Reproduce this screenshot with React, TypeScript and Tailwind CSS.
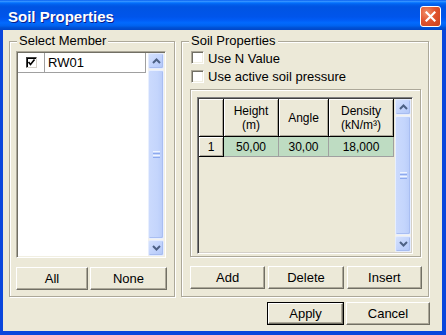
import React from "react";

function Btn({ children, className = "", def = false }: { children: React.ReactNode; className?: string; def?: boolean }) {
  const face = (
    <div className="w-full h-full flex items-center justify-center bg-[#ECE9D8] border border-t-white border-l-white border-r-[#716F64] border-b-[#716F64] shadow-[inset_-1px_-1px_0_#ACA899]">
      <span className="leading-[15px]">{children}</span>
    </div>
  );
  if (def) {
    return <div className={`h-[23px] border border-black flex ${className}`}>{face}</div>;
  }
  return <div className={`h-[23px] flex ${className}`}>{face}</div>;
}

function Group({ label, className = "", children }: { label: string; className?: string; children: React.ReactNode }) {
  return (
    <div className={`relative border border-[#ACA899] shadow-[inset_1px_1px_0_#fff,1px_1px_0_#fff] ${className}`}>
      <span className="absolute left-[7px] top-[-9px] px-[2px] bg-[#ECE9D8] leading-[15px]">{label}</span>
      {children}
    </div>
  );
}

function Arrow({ up }: { up: boolean }) {
  return (
    <div className="h-[16px] w-full rounded-[2px] border border-[#E4ECFE] bg-[linear-gradient(135deg,#D4E1FD_0%,#C3D4FC_50%,#B2C7F8_100%)] shadow-[inset_-1px_-1px_0_#A8BDF0] flex items-center justify-center">
      <svg width="9" height="6" viewBox="0 0 9 6">
        {up ? (
          <path d="M1 5 L4.5 1.5 L8 5" fill="none" stroke="#4D6185" strokeWidth="2" />
        ) : (
          <path d="M1 1 L4.5 4.5 L8 1" fill="none" stroke="#4D6185" strokeWidth="2" />
        )}
      </svg>
    </div>
  );
}

function VScroll({ className = "" }: { className?: string }) {
  return (
    <div className={`w-[16px] flex flex-col bg-[#F3F1EC] ${className}`}>
      <Arrow up />
      <div className="flex-1 my-[1px] rounded-[2px] border border-[#E8EFFE] bg-[linear-gradient(90deg,#CBDAFD_0%,#C4D5FC_60%,#B9CCF9_100%)] shadow-[inset_-1px_-1px_0_#A9BEF2] flex flex-col items-center justify-center gap-[1px]">
        <div className="w-[7px] h-[1px] bg-[#EEF4FE]" />
        <div className="w-[7px] h-[1px] bg-[#8DAAEE]" />
        <div className="w-[7px] h-[1px] bg-[#EEF4FE]" />
        <div className="w-[7px] h-[1px] bg-[#8DAAEE]" />
      </div>
      <Arrow up={false} />
    </div>
  );
}

function CheckBox() {
  return (
    <div className="w-[13px] h-[13px] bg-white border border-t-[#ACA899] border-l-[#ACA899] border-r-white border-b-white shadow-[inset_1px_1px_0_#716F64,inset_-1px_-1px_0_#F1EFE2]" />
  );
}

function HeadCell({ w, children }: { w: string; children?: React.ReactNode }) {
  return (
    <div className={`${w} h-full flex items-center justify-center text-center leading-[14px] text-[12px] bg-[#ECE9D8] border-r border-b border-black shadow-[inset_1px_1px_0_#fff,inset_-1px_-1px_0_#ACA899]`}>
      {children}
    </div>
  );
}

function DataCell({ w, children }: { w: string; children?: React.ReactNode }) {
  return (
    <div className={`${w} h-full flex items-center justify-center text-[12px] bg-[#BEDCC2] border-r border-b border-[#A0A0A0]`}>
      {children}
    </div>
  );
}

export default function App() {
  return (
    <div className="w-[446px] h-[335px] flex flex-col bg-[#0A46DC] font-['Liberation_Sans',Arial,sans-serif] text-[13px] text-black overflow-hidden">
      {/* Title bar */}
      <div className="h-[30px] flex items-start pl-[8px] pr-[5px] bg-[linear-gradient(180deg,#0058EE_0%,#3A93FF_4%,#288EFF_6%,#127DFF_8%,#036FFC_10%,#0262EE_14%,#0057E5_20%,#0054E3_24%,#0055EB_56%,#005BF5_66%,#026AFE_76%,#0062EF_86%,#0052D6_92%,#0046C8_100%)]">
        <span className="mt-[8px] text-white font-bold text-[15px] leading-[18px] [text-shadow:1px_1px_0_#0A1E8A]">Soil Properties</span>
        <div className="ml-auto mt-[6px] w-[21px] h-[21px] rounded-[3px] border border-white bg-[radial-gradient(circle_at_30%_30%,#F0906A_0%,#E2552F_45%,#C8401C_100%)] flex items-center justify-center">
          <svg width="11" height="11" viewBox="0 0 11 11">
            <path d="M1.5 1.5 L9.5 9.5 M9.5 1.5 L1.5 9.5" stroke="white" strokeWidth="2.2" strokeLinecap="square" />
          </svg>
        </div>
      </div>

      {/* Client */}
      <div className="flex-1 ml-[3px] mr-[4px] mb-[4px] bg-[#ECE9D8] flex flex-col">
        <div className="flex mt-[11px] ml-[6px] gap-[6px]">
          {/* Select Member */}
          <Group label="Select Member" className="w-[166px] h-[256px] flex flex-col pl-[6px] pt-[9px]">
            <div className="w-[150px] h-[207px] bg-white border border-t-[#ACA899] border-l-[#ACA899] border-r-white border-b-white shadow-[inset_1px_1px_0_#716F64,inset_-1px_-1px_0_#F1EFE2] p-[1px] flex">
              <div className="flex-1 flex flex-col">
                <div className="flex h-[20px] border-b border-[#A0A0A0]">
                  <div className="w-[27px] h-full border-r border-[#A0A0A0] flex items-center justify-center">
                    <div className="w-[11px] h-[11px] bg-white border border-t-[#404040] border-l-[#404040] border-r-[#D4D0C8] border-b-[#D4D0C8] shadow-[inset_1px_1px_0_#000] flex items-center justify-center">
                      <svg width="9" height="9" viewBox="0 0 9 9">
                        <path d="M1.5 4 L3.5 6.5 L7.5 1.5" fill="none" stroke="#000" strokeWidth="1.6" />
                      </svg>
                    </div>
                  </div>
                  <div className="flex-1 h-full border-r border-[#A0A0A0] flex items-center pl-[3px] leading-[15px]">RW01</div>
                </div>
              </div>
              <VScroll className="ml-[2px]" />
            </div>
            <div className="flex gap-[2px] mt-[9px] w-[151px]">
              <Btn className="w-[72px]">All</Btn>
              <Btn className="flex-1">None</Btn>
            </div>
          </Group>

          {/* Soil Properties */}
          <Group label="Soil Properties" className="w-[248px] h-[256px] flex flex-col pl-[8px] pt-[9px]">
            <div className="flex items-center h-[17px] ml-[1px] items-start">
              <CheckBox />
              <span className="ml-[4px] leading-[15px]">Use N Value</span>
            </div>
            <div className="flex items-center h-[17px] ml-[1px]">
              <CheckBox />
              <span className="ml-[4px] leading-[15px]">Use active soil pressure</span>
            </div>
            <div className="mt-[4px] w-[231px] h-[168px] border border-[#ACA899] shadow-[inset_1px_1px_0_#fff,1px_1px_0_#fff] pl-[6px] pt-[7px]">
              <div className="w-[216px] h-[157px] bg-[#ECE9D8] border border-t-[#808080] border-l-[#808080] border-r-white border-b-white shadow-[inset_1px_1px_0_#404040,inset_-1px_-1px_0_#D4D0C8] p-[1px] flex">
                <div className="w-[195px] flex flex-col">
                  <div className="flex h-[38px]">
                    <HeadCell w="w-[25px]" />
                    <HeadCell w="w-[55px]">Height<br />(m)</HeadCell>
                    <HeadCell w="w-[50px]">Angle</HeadCell>
                    <HeadCell w="w-[65px]">Density<br />(kN/m³)</HeadCell>
                  </div>
                  <div className="flex h-[20px]">
                    <HeadCell w="w-[25px]">1</HeadCell>
                    <DataCell w="w-[55px]">50,00</DataCell>
                    <DataCell w="w-[50px]">30,00</DataCell>
                    <DataCell w="w-[65px]">18,000</DataCell>
                  </div>
                </div>
                <div className="flex-1" />
                <VScroll />
              </div>
            </div>
            <div className="flex gap-[3px] mt-[9px] w-[232px]">
              <Btn className="flex-1">Add</Btn>
              <Btn className="flex-1">Delete</Btn>
              <Btn className="flex-1">Insert</Btn>
            </div>
          </Group>
        </div>

        <div className="flex justify-end gap-[2px] mt-[5px] pr-[12px]">
          <Btn def className="w-[77px]">Apply</Btn>
          <Btn className="w-[84px]">Cancel</Btn>
        </div>
      </div>
    </div>
  );
}
